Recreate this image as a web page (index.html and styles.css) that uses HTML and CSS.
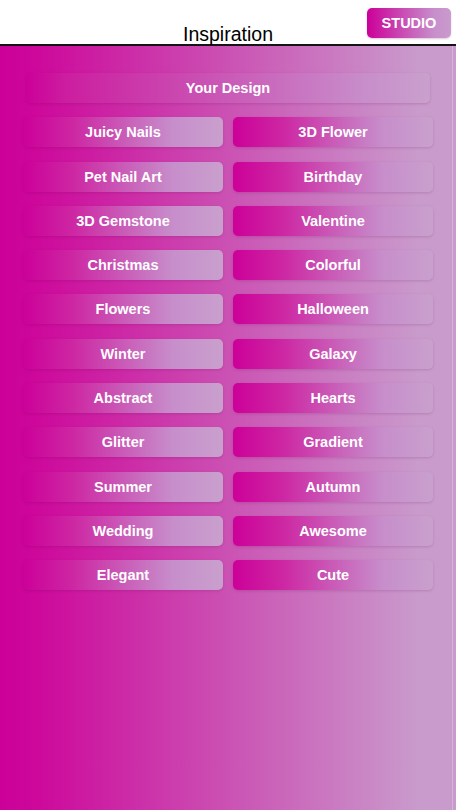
FILE: index.html
```html
<!DOCTYPE html>
<html>
<head>
<meta charset="utf-8">
<link rel="stylesheet" href="styles.css">
</head>
<body>
<div class="app">
  <header class="header">
    <div class="title">Inspiration</div>
    <button class="studio">STUDIO</button>
  </header>
  <main class="content">
    <div class="grid">
      <div class="btn wide">Your Design</div>
      <div class="btn">Juicy Nails</div>
      <div class="btn">3D Flower</div>
      <div class="btn">Pet Nail Art</div>
      <div class="btn">Birthday</div>
      <div class="btn">3D Gemstone</div>
      <div class="btn">Valentine</div>
      <div class="btn">Christmas</div>
      <div class="btn">Colorful</div>
      <div class="btn">Flowers</div>
      <div class="btn">Halloween</div>
      <div class="btn">Winter</div>
      <div class="btn">Galaxy</div>
      <div class="btn">Abstract</div>
      <div class="btn">Hearts</div>
      <div class="btn">Glitter</div>
      <div class="btn">Gradient</div>
      <div class="btn">Summer</div>
      <div class="btn">Autumn</div>
      <div class="btn">Wedding</div>
      <div class="btn">Awesome</div>
      <div class="btn">Elegant</div>
      <div class="btn">Cute</div>
    </div>
    <div class="edge"></div>
  </main>
</div>
</body>
</html>
```
FILE: styles.css
```css
html, body {
  margin: 0;
  padding: 0;
}
body {
  width: 456px;
  height: 810px;
  overflow: hidden;
  font-family: "Liberation Sans", Arial, sans-serif;
}
.app {
  display: flex;
  flex-direction: column;
  height: 810px;
}
.header {
  position: relative;
  height: 44px;
  background: #ffffff;
  border-bottom: 2px solid #141414;
  display: flex;
  align-items: flex-end;
  justify-content: center;
}
.title {
  font-size: 19.5px;
  color: #000;
  line-height: 22px;
  margin-bottom: -1px;
}
.studio {
  position: absolute;
  top: 8px;
  left: 367px;
  width: 84px;
  height: 30px;
  border: none;
  border-radius: 5px;
  background: linear-gradient(to right, #cc0099 0%, #c78fcb 80%, #c99bcc 100%);
  color: #fff;
  font-family: "Liberation Sans", Arial, sans-serif;
  font-weight: bold;
  font-size: 14.5px;
  padding: 0;
  box-shadow: 0 1px 2px rgba(80, 0, 60, 0.2);
}
.content {
  position: relative;
  flex: 1;
  background: linear-gradient(to right, #cc0099 0%, #cd089b 8%, #c99bcc 92%, #c99bcc 100%);
  padding: 27px 23px 0 23px;
}
.grid {
  display: grid;
  grid-template-columns: 200px 200px;
  column-gap: 10px;
  row-gap: 14.3px;
}
.btn {
  height: 30px;
  border-radius: 5px;
  background: linear-gradient(to right, #cc0099 0%, #cd27a3 25%, #c78ecb 75%, #c9a0cd 100%);
  color: #fff;
  font-weight: bold;
  font-size: 14.5px;
  display: flex;
  align-items: center;
  justify-content: center;
  box-shadow: 0 1px 3px rgba(90, 0, 70, 0.18);
}
.btn.wide {
  grid-column: 1 / 3;
  margin: 0 3px;
  background: linear-gradient(to right, #cc0099 0%, #cc1ea0 10%, #c88fcb 85%, #c9a0cd 100%);
}
.edge {
  position: absolute;
  top: 0;
  bottom: 0;
  left: 452px;
  width: 1px;
  background: rgba(255, 255, 255, 0.25);
}
```
